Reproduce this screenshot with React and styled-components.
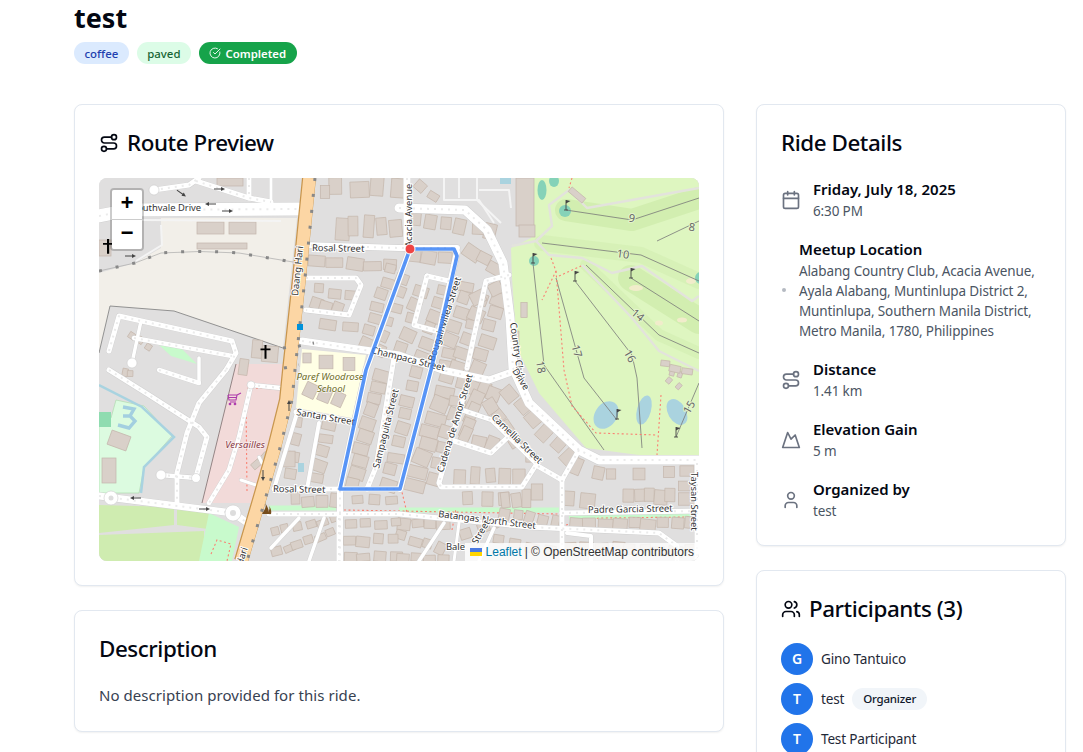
import React from 'react';
import styled, { createGlobalStyle } from 'styled-components';
import { Route, Calendar, Mountain, User, Users, CircleCheckBig } from 'lucide-react';

const Global = createGlobalStyle`
  html, body { margin: 0; padding: 0; background: #fff; overflow: hidden; height: 752px; }
  body { font-family: "Noto Sans", "Open Sans", sans-serif; color: #030712; }
`;

const Page = styled.div`
  padding: 0 17px 0 74px;
  height: 752px;
  overflow: hidden;
  box-sizing: border-box;
`;
const Title = styled.h1`
  margin: 0;
  font-size: 27px;
  line-height: 35px;
  font-weight: 700;
  color: #030712;
`;
const Tags = styled.div`
  display: flex;
  gap: 8px;
  margin-top: 7px;
  margin-bottom: 40px;
`;
const Tag = styled.span`
  display: inline-flex;
  align-items: center;
  justify-content: center;
  gap: 4px;
  height: 22px;
  box-sizing: border-box;
  padding: 0 10.5px;
  border-radius: 999px;
  font-size: 11.4px;
  font-weight: ${p => (p.$tone === 'done' ? 600 : 500)};
  background: ${p => ({ blue: '#dbeafe', green: '#dcfce7', done: '#16a34a' }[p.$tone])};
  color: ${p => ({ blue: '#1e40af', green: '#166534', done: '#ffffff' }[p.$tone])};
`;
const Columns = styled.div`
  display: grid;
  grid-template-columns: 650px 310px;
  gap: 32px;
  align-items: start;
`;
const Stack = styled.div`
  display: flex;
  flex-direction: column;
  gap: 24px;
`;
const Card = styled.section`
  border: 1px solid #e2e8f0;
  border-radius: 8px;
  background: #fff;
  box-shadow: 0 1px 2px rgba(0, 0, 0, 0.06);
  padding: 24px;
`;
const Heading = styled.h2`
  display: flex;
  align-items: center;
  gap: 8px;
  margin: 0 0 ${p => p.$after || 21}px;
  font-size: 22.4px;
  line-height: 28px;
  font-weight: 500;
  letter-spacing: -0.02em;
  color: #030712;
`;
const Body = styled.p`
  margin: 0;
  font-size: 15px;
  line-height: 23px;
  letter-spacing: 0.004em;
  color: #374151;
`;
const MapBox = styled.div`
  position: relative;
  height: 383px;
  border-radius: 8px;
  overflow: hidden;
  background: #e0dfdf;
`;
const MapCanvas = styled.svg`
  display: block;
  width: 600px;
  height: 383px;
`;
const RoadLabel = styled.text`
  font-family: "Noto Sans", sans-serif;
  font-size: 9.4px;
  fill: #333;
  stroke: #fff;
  stroke-width: 2px;
  paint-order: stroke;
`;
const PlaceLabel = styled.text`
  font-family: "Noto Sans", sans-serif;
  font-size: 9.6px;
  font-style: italic;
  text-anchor: middle;
  fill: ${p => p.$color};
  stroke: #fff;
  stroke-width: 1.5px;
  stroke-opacity: 0.6;
  paint-order: stroke;
`;
const HoleLabel = styled.text`
  font-family: "Noto Sans", sans-serif;
  font-size: 11px;
  text-anchor: middle;
  fill: #666;
  stroke: #e4f5cc;
  stroke-width: 2px;
  paint-order: stroke;
`;
const ZoomBar = styled.div`
  position: absolute;
  left: 11px;
  top: 10px;
  border: 2px solid rgba(0, 0, 0, 0.2);
  border-radius: 4px;
  background-clip: padding-box;
  display: flex;
  flex-direction: column;
`;
const ZoomButton = styled.div`
  width: 30px;
  height: 29px;
  background: #fff;
  color: #000;
  display: flex;
  align-items: center;
  justify-content: center;
  font: bold 22px/29px "Liberation Mono", monospace;
  border-bottom: ${p => (p.$first ? '1px solid #ccc' : 'none')};
  border-radius: ${p => (p.$first ? '2px 2px 0 0' : '0 0 2px 2px')};
`;
const Attribution = styled.div`
  position: absolute;
  right: 0;
  bottom: 0;
  height: 18px;
  padding: 0 5px;
  display: flex;
  align-items: center;
  gap: 3px;
  background: rgba(255, 255, 255, 0.8);
  font: 12px/18px "Liberation Sans", Arial, sans-serif;
  color: #333;
`;
const AttrLink = styled.span`
  color: #0078a8;
`;
const Flag = styled.svg`
  width: 12px;
  height: 8px;
  margin-right: 1px;
`;
const DetailList = styled.div`
  display: flex;
  flex-direction: column;
  gap: 19px;
  padding-bottom: 1px;
`;
const DetailRow = styled.div`
  display: flex;
  align-items: center;
  gap: 12px;
  color: #6b7280;
`;
const IconSlot = styled.span`
  flex: none;
  display: flex;
  align-items: center;
  justify-content: center;
  width: 20px;
  height: 20px;
`;
const TinyDot = styled.span`
  flex: none;
  width: 4px;
  height: 4px;
  margin-left: 1px;
  margin-right: 1px;
  border-radius: 50%;
  background: #b5bac2;
`;
const DetailText = styled.div`
  min-width: 0;
`;
const DetailTitle = styled.div`
  font-size: 15px;
  line-height: 20px;
  font-weight: 600;
  color: #030712;
`;
const DetailValue = styled.div`
  font-size: 13.5px;
  line-height: 20px;
  margin: 2px 0 -1px;
  letter-spacing: -0.01em;
  color: #4b5563;
`;
const People = styled.div`
  display: flex;
  flex-direction: column;
  gap: 8px;
`;
const Person = styled.div`
  display: flex;
  align-items: center;
  gap: 8px;
  font-size: 13.6px;
  letter-spacing: -0.015em;
  color: #1f2937;
`;
const PersonName = styled.span`
  padding-bottom: 2px;
`;
const Avatar = styled.span`
  box-sizing: border-box;
  width: 32px;
  height: 32px;
  padding-bottom: 2px;
  border-radius: 50%;
  background: #2174ea;
  color: #fff;
  font-size: 14px;
  font-weight: 600;
  display: flex;
  align-items: center;
  justify-content: center;
`;
const Role = styled.span`
  box-sizing: border-box;
  padding: 0 11px 1px;
  height: 22px;
  border-radius: 999px;
  background: #f1f5f9;
  display: inline-flex;
  align-items: center;
  font-size: 11.5px;
  font-weight: 500;
  color: #0f172a;
`;

/* ---------- map data, coordinates are pixels on the 600×383 map ---------- */
const lanes = [
  'M345 0 L345 22 L380 22 L395 45', 'M360 0 L360 20', 'M378 0 L378 22 L402 45', 'M380 12 L410 12 L412 30',
  'M62 47 L63 67 L37 83', 'M43 42 L182 43',
];
const roads = [
  ['M0 38 L30 32 L200 31', 13],
  ['M55 12 L90 7 L100 0', 5], ['M97 3 L150 20 L172 24', 5], ['M150 0 L150 20', 5], ['M172 0 L172 25', 3],
  ['M308 0 L308 70', 7],
  ['M205 67 L300 70 L358 70', 6],
  ['M300 30 L366 32 L388 52 L404 85 L411 140 L414 190 L430 225 L480 272 L500 282 L600 282', 9],
  ['M311 71 L267 192 L241 311 L241 383', 6],
  ['M358 74 L332 192 L301 311', 6],
  ['M203 163 L300 177 L343 192 L390 202 L410 195', 7],
  ['M207 100 L257 100 L262 107 L250 137 L207 132', 5],
  ['M328 98 L350 103', 5], ['M328 98 L315 147 L337 153', 5],
  ['M410 97 L387 103 L368 190', 5],
  ['M197 234 L253 244', 5],
  ['M295 180 L277 289 L268 311', 5],
  ['M370 199 L340 305 L342 309 L423 309 L437 287 L463 302', 5],
  ['M363 232 L393 242 L437 285', 5], ['M352 262 L392 275 L410 258', 5],
  ['M463 302 L463 383', 5], ['M480 272 L463 302', 5],
  ['M175 311 L300 311', 5],
  ['M170 336 L300 336 L430 349 L560 355 L578 368 L578 383', 5],
  ['M463 335 L600 333', 5], ['M468 355 L492 358 L492 383', 4],
  ['M598 285 L598 383', 5],
  ['M220 245 L208 311', 4], ['M198 235 L175 311', 4],
  ['M10 173 L20 138 L133 163 L137 175 L127 192', 5],
  ['M42 143 L33 185', 3.5], ['M35 160 L133 178', 4.5], ['M100 180 L100 205', 3.5],
  ['M10 192 L50 217 L100 249 L108 259 L97 299', 5],
  ['M127 192 L100 225 L88 255 L78 295 L78 325', 5], ['M60 192 L100 205', 4.5],
  ['M62 297 L97 300', 4.5], ['M0 318 L134 335 L150 346', 7],
  ['M172 370 L200 340', 3.5], ['M210 383 L225 340', 3.5], ['M320 383 L345 345', 3.5],
  ['M380 383 L395 350', 3.5], ['M360 345 L355 383', 3], ['M240 340 L240 383', 5],
  ['M182 210 L152 207 L140 259 L130 292 L110 325', 4.5], ['M142 302 L157 307', 3], ['M160 279 L163 285', 3],
];
const buildingRows = [
  [238, 10, 300, 10, 17, 17, 18], [226, 14, 226, 14, 9, 12, 9], [242, 50, 298, 50, 13, 20, 14],
  [218, 82, 292, 88, 16, 11, 17], [218, 112, 250, 118, 12, 11, 14], [216, 124, 240, 130, 11, 10, 12],
  [228, 145, 250, 148, 15, 10, 19], [293, 92, 266, 165, 13, 11, 14], [322, 8, 335, 18, 11, 9, 13], [318, 42, 392, 54, 13, 14, 16],
  [316, 78, 345, 80, 15, 11, 18], [305, 100, 280, 172, 12, 10, 15], [322, 112, 302, 170, 13, 11, 15],
  [344, 112, 322, 178, 13, 11, 14], [368, 108, 345, 188, 14, 11, 14],
  [382, 122, 360, 188, 14, 11, 15], [400, 120, 378, 190, 14, 12, 15], [372, 74, 396, 90, 17, 13, 18],
  [395, 110, 380, 118, 13, 12, 16], [281, 196, 254, 306, 14, 11, 13], [316, 196, 288, 306, 15, 11, 14],
  [348, 200, 316, 306, 18, 13, 14], [362, 206, 336, 302, 15, 12, 17],
  [374, 208, 396, 216, 14, 13, 14], [378, 222, 368, 250, 12, 19, 15], [392, 228, 416, 262, 13, 13, 13],
  [412, 216, 470, 278, 14, 14, 16], [368, 258, 392, 266, 13, 13, 16], [362, 300, 420, 298, 12, 15, 14],
  [368, 322, 405, 322, 13, 14, 16], [405, 322, 428, 320, 9, 16, 12], [432, 280, 432, 280, 12, 10, 12],
  [438, 314, 438, 314, 10, 18, 10], [478, 290, 500, 296, 13, 14, 18], [512, 296, 512, 296, 12, 12, 12],
  [540, 296, 540, 296, 11, 11, 11], [570, 294, 570, 294, 11, 11, 11], [588, 293, 588, 293, 18, 10, 18],
  [588, 308, 588, 308, 18, 12, 18], [588, 321, 588, 321, 18, 12, 18], [530, 318, 570, 318, 12, 13, 11],
  [470, 321, 490, 321, 13, 13, 20], [476, 345, 593, 346, 14, 10, 15], [305, 345, 345, 345, 12, 10, 15],
  [302, 358, 340, 372, 12, 10, 14], [368, 355, 400, 342, 11, 9, 14], [405, 335, 455, 345, 10, 11, 14],
  [400, 362, 450, 372, 12, 9, 15], [470, 368, 520, 370, 13, 11, 15], [530, 372, 590, 372, 13, 9, 15],
  [175, 355, 235, 340, 10, 8, 12], [178, 372, 232, 355, 10, 8, 12], [252, 345, 296, 345, 11, 9, 14],
  [250, 362, 296, 362, 12, 9, 14], [250, 378, 296, 378, 12, 9, 14], [302, 378, 345, 380, 11, 8, 14],
  [200, 246, 190, 294, 10, 11, 16], [229, 246, 216, 300, 13, 10, 14], [195, 322, 235, 322, 11, 12, 14],
  [258, 322, 292, 322, 12, 9, 16], [208, 180, 208, 180, 10, 10, 10], [227, 184, 227, 184, 18, 12, 18],
  [250, 186, 250, 186, 15, 14, 15], [210, 213, 240, 223, 14, 12, 16], [32, 158, 48, 170, 7, 7, 11],
  [190, 281, 190, 281, 14, 14, 14], [156, 285, 163, 278, 10, 6, 10],
  [25, 196, 33, 197, 7, 7, 8], [425, 132, 425, 132, 8, 14, 8], [418, 163, 418, 163, 5, 20, 5],
  [573, 195, 582, 197, 5, 5, 9], [568, 202, 578, 209, 5, 5, 11], [565, 186, 590, 192, 10, 7, 12],
];
const bigBuildings = [
  [98, 44, 27, 12, 0], [130, 44, 27, 12, 0], [98, 65, 50, 6, 0], [118, 0, 26, 8, 0], [0, 62, 12, 16, 0],
  [153, 162, 10, 18, 5], [163, 168, 16, 16, 5], [140, 181, 9, 16, 8], [417, 0, 18, 48, 0], [420, 47, 16, 12, 0],
  [10, 255, 20, 15, 20], [3, 280, 14, 25, 0], [469, 14, 18, 6, 40],
];
const seeded = (seed) => {
  const v = Math.sin(seed * 12.9898) * 43758.5453;
  return v - Math.floor(v);
};
const houses = [];
buildingRows.forEach(([x1, y1, x2, y2, w, h, step], r) => {
  const len = Math.hypot(x2 - x1, y2 - y1);
  const angle = (Math.atan2(y2 - y1, x2 - x1) * 180) / Math.PI;
  const n = Math.max(1, Math.round(len / step) + 1);
  for (let i = 0; i < n; i += 1) {
    const t = n === 1 ? 0 : i / (n - 1);
    const a = seeded(r * 31 + i);
    const b = seeded(r * 17 + i * 3 + 5);
    const c = seeded(r * 7 + i * 11 + 2);
    const hw = w * (0.75 + a * 0.4);
    const hh = h * (0.8 + b * 0.4);
    const cx = x1 + (x2 - x1) * t + (n > 1 ? (c - 0.5) * 4 : 0);
    const cy = y1 + (y2 - y1) * t + (n > 1 ? (a - 0.5) * 4 : 0);
    const base = Math.abs(angle) > 45 && Math.abs(angle) < 135 ? angle + 90 : angle;
    houses.push({ key: `${r}-${i}`, cx, cy, w: hw, h: hh, rot: base + (n > 1 ? (b - 0.5) * 14 : 0) });
  }
});
bigBuildings.forEach(([x, y, w, h, rot], i) => {
  houses.push({ key: `big-${i}`, cx: x + w / 2, cy: y + h / 2, w, h, rot });
});

const roadLabels = [
  ['Southvale Drive', 33, 33, 0], ['Rosal Street', 213, 73, 1], ['Daang Hari', 199, 118, -84],
  ['Hari', 143, 388, -72], ['Acacia Avenue', 313, 69, -90], ['Bougainvillea Street', 335, 184, -72],
  ['Champaca Street', 272, 175, 14], ['Santan Street', 197, 237, 10], ['Sampaguita Street', 280, 291, -76],
  ['Cadena de Amor Street', 344, 295, -73], ['Camellia Street', 392, 240, 44], ['Rosal Street', 174, 314, 1],
  ['Batangas North Street', 339, 339, 7], ['Padre Garcia Street', 489, 335, -1], ['Bale', 347, 372, 0],
  ['Street', 378, 367, -60], ['Taysan Street', 592, 294, 90], ['Country Club', 411, 145, 82], ['Drive', 413, 193, 58],
];
const holeLabels = [
  ['9', 533, 44, 8], ['8', 593, 53, 8], ['10', 524, 80, 8], ['14', 539, 141, 40], ['17', 478, 177, 75],
  ['16', 531, 182, 60], ['18', 442, 193, 80], ['15', 590, 233, -60],
];
const flags = [[467, 32], [434, 85], [476, 103], [532, 100], [518, 241], [577, 259]];
const arrows = [[120, 11, 0], [112, 26, 180], [128, 33, 0], [31, 78, 0], [190, 228, -90], [164, 297, 90], [37, 320, 180], [105, 331, 0], [82, 15, 35]];

const MapDrawing = () => (
  <MapCanvas viewBox="0 0 600 383">
    <rect width="600" height="383" fill="#e0dfdf" />
    <polygon points="0,95 36,85 62,70 62,40 198,40 184,170 75,133 11,128 0,175" fill="#f2efe9" />
    <polyline points="0,175 11,128 75,133 184,170" fill="none" stroke="#888" strokeWidth="0.9" />
    <polygon points="137,186 190,186 185,225 172,270 152,325 103,325" fill="#f2dad9" />
    <line x1="137" y1="186" x2="103" y2="325" stroke="#8a7a7a" strokeWidth="0.9" />
    <polygon points="203,171 267,177 253,240 197,230" fill="#ffffe5" />
    <polygon points="433,0 600,0 600,282 540,277 487,270 440,215 418,170 413,100 412,70 432,60" fill="#def6c0" />
    <polygon points="0,327 75,329 75,347 0,355" fill="#cfecb0" />
    <polygon points="78,329 110,335 109,351 78,347" fill="#cfecb0" />
    <polygon points="0,357 105,353 105,383 0,383" fill="#cfecb0" />
    <polygon points="110,335 140,349 133,383 100,383" fill="#c8facc" />
    <polygon points="17,222 45,228 73,258 45,290 40,315 0,315 0,240 12,240" fill="#dcfbe0" stroke="#a8d8a8" strokeWidth="0.6" />
    <polygon points="60,167 82,170 98,186 72,178" fill="#c8facc" />
    <rect x="0" y="234" width="12" height="15" fill="#8fdcb0" />
    <path d="M170 330 L237 330 M300 332 L460 332 M470 339 L592 337" stroke="#c8facc" strokeWidth="5" fill="none" />
    <path d="M0 207 L43 229 L75 259 L45 289 L42 315" stroke="#a8d3e0" strokeWidth="2.5" fill="none" />
    <path d="M24 229 L35 231 L31 238 L36 243 L30 250 L19 247 M24 238 L31 238" stroke="#a3cfe0" strokeWidth="3.4" fill="none" />

    <g fill="none" strokeLinecap="round" strokeLinejoin="round" stroke="#d2eeb0">
      <path d="M467 32 L533 42 L600 20" strokeWidth="22" />
      <path d="M443 65 L542 77 L600 103" strokeWidth="16" opacity="0.6" />
      <path d="M532 100 L600 143" strokeWidth="26" />
      <path d="M487 87 L560 157 L600 175" strokeWidth="12" opacity="0.6" />
    </g>
    <g fill="#f1eccb">
      <ellipse cx="537" cy="110" rx="7" ry="3" />
      <ellipse cx="560" cy="145" rx="4" ry="2.5" />
      <ellipse cx="583" cy="142" rx="5" ry="2.5" />
      <ellipse cx="592" cy="103" rx="5" ry="3" />
    </g>
    <g fill="#85d2b8">
      <ellipse cx="443" cy="12" rx="4.5" ry="10" />
      <ellipse cx="455" cy="3" rx="5" ry="6" />
      <circle cx="466" cy="33" r="6" />
      <circle cx="435" cy="83" r="5" />
      <circle cx="602" cy="100" r="6" />
    </g>
    <g fill="#aad3df">
      <rect x="401" y="0" width="11" height="6" />
      <ellipse cx="507" cy="237" rx="11" ry="15" transform="rotate(35 507 237)" />
      <ellipse cx="545" cy="232" rx="7" ry="15" transform="rotate(15 545 232)" />
      <ellipse cx="578" cy="234" rx="9" ry="14" transform="rotate(-30 578 234)" />
      <rect x="199" y="285" width="6" height="9" />
    </g>
    <g fill="none" stroke="#787878" strokeWidth="0.8">
      <path d="M467 32 L533 42 L600 20" />
      <path d="M443 65 L542 77 L600 103" />
      <path d="M532 100 L600 143" />
      <path d="M558 63 L600 43" />
      <path d="M434 85 L445 187 L505 272" />
      <path d="M476 103 L533 177 L538 200 L543 270" />
      <path d="M457 100 L485 200 L518 242" />
      <path d="M487 87 L560 157 L600 175" />
      <path d="M577 259 L600 205" />
    </g>
    <g fill="none" stroke="#e3e3dc" strokeWidth="2.4" strokeLinejoin="round">
      <path d="M413 68 L437 63 L453 48 L450 27 L470 12 L488 30 L600 10" />
      <path d="M437 63 L450 77 L483 80 L513 95 L543 88 L593 123 L600 118" />
      <path d="M483 87 L533 140 L560 173 L600 193" />
    </g>
    <g fill="none" stroke="#fa8072" strokeWidth="1.1" strokeDasharray="2 2.5">
      <path d="M473 0 L470 10" />
      <path d="M452 80 L457 93 L443 122" />
      <path d="M457 93 L465 192 L473 228 L497 255 L557 257" />
      <path d="M562 217 L558 277" />
      <path d="M460 98 L482 88" />
      <path d="M245 332 L460 336" />
      <path d="M467 347 L500 340 L592 339" />
      <path d="M148 313 L147 225 M148 210 L185 211" />
      <path d="M112 376 L118 362 L132 366 L128 383" />
      <path d="M353 352 L357 330 M302 310 L308 335" />
    </g>

    <g fill="#d9d0c9" stroke="#c4b6ab" strokeWidth="0.7">
      {houses.map(h => (
        <rect key={h.key} x={-h.w / 2} y={-h.h / 2} width={h.w} height={h.h}
          transform={`translate(${h.cx} ${h.cy}) rotate(${h.rot})`} />
      ))}
    </g>
    <g fill="none" stroke="#f4f4f4" strokeWidth="2" strokeLinejoin="round">
      {lanes.map(d => <path key={d} d={d} />)}
    </g>
    <g fill="none" stroke="#cfcfcf" strokeLinecap="round" strokeLinejoin="round">
      {roads.map(([d, w]) => <path key={d} d={d} strokeWidth={w + 0.8} />)}
    </g>
    <g fill="none" stroke="#fff" strokeLinecap="round" strokeLinejoin="round">
      {roads.map(([d, w]) => <path key={d} d={d} strokeWidth={w} />)}
    </g>
    <g fill="none" stroke="#ebebeb" strokeDasharray="2 5" strokeLinejoin="round">
      {roads.filter(([, w]) => w >= 4.5).map(([d]) => <path key={d} d={d} strokeWidth="2" />)}
    </g>
    <g fill="#fff" stroke="#ccc" strokeWidth="0.6">
      <circle cx="55" cy="12" r="5" />
      <circle cx="33" cy="185" r="5" />
      <circle cx="62" cy="297" r="5" />
      <circle cx="97" cy="300" r="4.5" />
      <circle cx="12" cy="320" r="7" />
      <circle cx="134" cy="335" r="8" />
      <circle cx="152" cy="207" r="4" />
    </g>
    <circle cx="134" cy="335" r="3" fill="#ddd" />
    <circle cx="12" cy="320" r="2.5" fill="#ddd" />

    <path d="M210 0 L200 100 L190 192 L187 222 L175 270 L160 322 L142 383" fill="none" stroke="#c8964e" strokeWidth="14" />
    <path d="M210.5 0 L200.5 100 L190.5 192 L187.5 222 L175.5 270 L160.5 322 L142.5 383" fill="none" stroke="#fcd6a4" strokeWidth="12.5" />
    <path d="M216 0 L206 100 L196 192 L193 222 L181 270 L166 322 L148 383" fill="none" stroke="#888" strokeWidth="3" strokeDasharray="3 13" />
    <path d="M0 93 L36 85 L62 75 Q100 72 140 75 L194 84" fill="none" stroke="#aaa" strokeWidth="0.7" />
    <path d="M0 93 L36 85 L62 75 Q100 72 140 75 L194 84" fill="none" stroke="#888" strokeWidth="3" strokeDasharray="3 14" />
    <path d="M184 170 L200 168 L215 165 M185 190 L200 187" fill="none" stroke="#888" strokeWidth="3" strokeDasharray="3 12" />

    <rect x="198" y="146" width="6" height="6" fill="#0092da" />

    <g fill="#000">
      <path d="M8 61 h2.2 v4 h4 v1.8 h-4 v9 h-2.2 v-9 h-4 v-1.8 h4z" />
      <path d="M165.5 167 h2 v3.5 h4 v1.8 h-4 v8.5 h-2 v-8.5 h-4 v-1.8 h4z" />
    </g>
    <g fill="none" stroke="#ac39ac" strokeWidth="1.1">
      <path d="M129 217 h9 l-1 5 h-7 l-1-5 M129 219.5 h9 M138 217 l4-2 M131 224 h6" />
      <circle cx="131" cy="226" r="0.8" />
      <circle cx="136" cy="226" r="0.8" />
    </g>
    <g fill="#774d1b">
      <path d="M165 323 C169 329 165 332 163 336 L169 336 C171 332 168 328 165 323 Z" />
      <path d="M169 326 C172 330 170 333 168 336 L172 336 C173 332 171 329 169 326 Z" />
    </g>
    {arrows.map(([x, y, r]) => (
      <g key={`${x}-${y}`} transform={`translate(${x} ${y}) rotate(${r})`}>
        <path d="M-5 0 H3" stroke="#444" strokeWidth="1" />
        <path d="M2 -2 L6 0 L2 2 Z" fill="#444" />
      </g>
    ))}
    {flags.map(([x, y]) => (
      <g key={`${x}-${y}`}>
        <path d={`M${x - 2} ${y} h4 M${x} ${y} v-10`} stroke="#444" strokeWidth="0.9" />
        <path d={`M${x} ${y - 10} l4.5 1 l-4.5 2.5 Z`} fill="#444" />
      </g>
    ))}

    {holeLabels.map(([t, x, y, r]) => (
      <HoleLabel key={t} transform={`translate(${x} ${y}) rotate(${r} 0 -4)`}>{t}</HoleLabel>
    ))}
    {roadLabels.map(([t, x, y, r]) => (
      <RoadLabel key={`${t}-${x}`} transform={`translate(${x} ${y}) rotate(${r})`}>{t}</RoadLabel>
    ))}
    <PlaceLabel x="231" y="202" $color="#6d6d1e">Paref Woodrose</PlaceLabel>
    <PlaceLabel x="232" y="214" $color="#6d6d1e">School</PlaceLabel>
    <PlaceLabel x="146" y="270" $color="#8a3b46">Versailles</PlaceLabel>

    <path d="M311 71 L267 192 L241 311 L301 311 L332 192 L358 78 L355 71 Z" fill="none" stroke="#3b82f6" strokeOpacity="0.85" strokeWidth="3.6" strokeLinejoin="round" />
    <circle cx="311" cy="71" r="5" fill="#ef4444" stroke="#fff" strokeWidth="1" />
  </MapCanvas>
);

const Detail = ({ icon, title, children }) => (
  <DetailRow>
    <IconSlot>{icon}</IconSlot>
    <DetailText>
      <DetailTitle>{title}</DetailTitle>
      <DetailValue>{children}</DetailValue>
    </DetailText>
  </DetailRow>
);

export default function App() {
  return (
    <Page>
      <Global />
      <Title>test</Title>
      <Tags>
        <Tag $tone="blue">coffee</Tag>
        <Tag $tone="green">paved</Tag>
        <Tag $tone="done"><CircleCheckBig size={12} strokeWidth={1.8} />Completed</Tag>
      </Tags>
      <Columns>
        <Stack>
          <Card>
            <Heading><Route size={20} />Route Preview</Heading>
            <MapBox>
              <MapDrawing />
              <ZoomBar>
                <ZoomButton $first>+</ZoomButton>
                <ZoomButton>−</ZoomButton>
              </ZoomBar>
              <Attribution>
                <Flag viewBox="0 0 12 8"><rect width="12" height="4" fill="#4C7BE1" /><rect y="4" width="12" height="4" fill="#FFD500" /></Flag>
                <AttrLink>Leaflet</AttrLink> | © OpenStreetMap contributors
              </Attribution>
            </MapBox>
          </Card>
          <Card>
            <Heading>Description</Heading>
            <Body>No description provided for this ride.</Body>
          </Card>
        </Stack>
        <Stack>
          <Card>
            <Heading $after={22}>Ride Details</Heading>
            <DetailList>
              <Detail icon={<Calendar size={20} />} title="Friday, July 18, 2025">6:30 PM</Detail>
              <DetailRow>
                <TinyDot />
                <DetailText>
                  <DetailTitle>Meetup Location</DetailTitle>
                  <DetailValue>Alabang Country Club, Acacia Avenue, Ayala Alabang, Muntinlupa District 2, Muntinlupa, Southern Manila District, Metro Manila, 1780, Philippines</DetailValue>
                </DetailText>
              </DetailRow>
              <Detail icon={<Route size={20} />} title="Distance">1.41 km</Detail>
              <Detail icon={<Mountain size={20} />} title="Elevation Gain">5 m</Detail>
              <Detail icon={<User size={20} />} title="Organized by">test</Detail>
            </DetailList>
          </Card>
          <Card>
            <Heading $after={20}><Users size={20} />Participants (3)</Heading>
            <People>
              <Person><Avatar>G</Avatar><PersonName>Gino Tantuico</PersonName></Person>
              <Person><Avatar>T</Avatar><PersonName>test</PersonName><Role>Organizer</Role></Person>
              <Person><Avatar>T</Avatar><PersonName>Test Participant</PersonName></Person>
            </People>
          </Card>
        </Stack>
      </Columns>
    </Page>
  );
}
